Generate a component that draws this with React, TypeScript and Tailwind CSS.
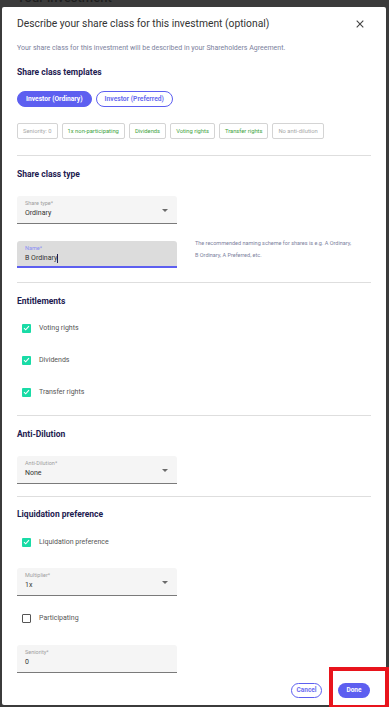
import React from 'react';

const font = { fontFamily: 'Roboto, "Liberation Sans", sans-serif' };

const Heading = ({ children, className = '' }: { children: React.ReactNode; className?: string }) => (
  <h3 className={`text-[8.5px] leading-[12px] font-bold text-[#1d2050] ${className}`}>{children}</h3>
);

const Divider = ({ className = '' }: { className?: string }) => <div className={`h-px bg-[#dedede] ${className}`} />;

const Arrow = () => (
  <svg width="6" height="4" viewBox="0 0 6 4" className="absolute right-[9px] top-[13px]">
    <path d="M0 0 L6 0 L3 3 Z" fill="#6b6b6b" />
  </svg>
);

const SelectField = ({ label, value, className = '', arrow = true }: { label: string; value: string; className?: string; arrow?: boolean }) => (
  <div className={`relative w-[160px] h-[28px] bg-[#f5f5f5] border-b border-[#7a7a7a] rounded-t-[3px] pl-[8px] pt-[4px] ${className}`}>
    <div className="text-[5.5px] leading-[7px] text-[#9e9e9e]">{label}</div>
    <div className="text-[7px] leading-[12px] text-[#333]">{value}</div>
    {arrow && <Arrow />}
  </div>
);

const Check = ({ label, checked = true, className = '' }: { label: string; checked?: boolean; className?: string }) => (
  <div className={`h-[32px] flex items-center pl-[5px] ${className}`}>
    {checked ? (
      <div className="w-[9px] h-[9px] bg-[#19dba6] rounded-[1px] flex items-center justify-center">
        <svg width="7" height="6" viewBox="0 0 7 6">
          <path d="M1 3.2 L2.7 4.8 L6 1.2" stroke="white" strokeWidth="1.1" fill="none" />
        </svg>
      </div>
    ) : (
      <div className="w-[9px] h-[9px] border-[1.5px] border-[#555] rounded-[1px]" />
    )}
    <span className="ml-[8px] text-[7px] text-[#555]">{label}</span>
  </div>
);

const tags: { text: string; on: boolean }[] = [
  { text: 'Seniority: 0', on: false },
  { text: '1x non-participating', on: true },
  { text: 'Dividends', on: true },
  { text: 'Voting rights', on: true },
  { text: 'Transfer rights', on: true },
  { text: 'No anti-dilution', on: false },
];

export default function App() {
  return (
    <div className="w-[389px] h-[707px] bg-[#3b3b3b] overflow-hidden relative" style={font}>
      <div className="h-[7px] overflow-hidden pl-[17px]">
        <div className="-mt-[9px] text-[13px] leading-[14px] font-medium text-[#1e1e1e]">Your investment</div>
      </div>
      <div className="ml-[2px] w-[384px] h-[698px] bg-white rounded-[2px] px-[15px] pt-[9px]">
        <div className="flex items-center justify-between h-[16px]">
          <h2 className="text-[10.3px] leading-[16px] text-[#333]">Describe your share class for this investment (optional)</h2>
          <svg width="8" height="8" viewBox="0 0 8 8" className="mr-[7px]">
            <path d="M0.7 0.7 L7.3 7.3 M7.3 0.7 L0.7 7.3" stroke="#444" strokeWidth="1.1" />
          </svg>
        </div>
        <p className="mt-[11px] text-[7px] leading-[10px] text-[#7c819d]">
          Your share class for this investment will be described in your Shareholders Agreement.
        </p>
        <Heading className="mt-[13px]">Share class templates</Heading>
        <div className="mt-[13px] flex gap-[4px]">
          <button className="h-[16px] px-[8px] rounded-full bg-[#5d5ff0] border border-[#5d5ff0] text-white text-[6.7px] font-bold">
            Investor (Ordinary)
          </button>
          <button className="h-[16px] px-[8px] rounded-full border border-[#5d5ff0] text-[#6b6df0] text-[6.7px] font-bold">
            Investor (Preferred)
          </button>
        </div>
        <div className="mt-[16px] flex gap-[4px]">
          {tags.map((t) => (
            <span
              key={t.text}
              className={`h-[16px] px-[5px] flex items-center border border-[#d4d4d4] rounded-[2px] text-[5.8px] ${t.on ? 'text-[#3ea33e]' : 'text-[#a8a8a8]'}`}
            >
              {t.text}
            </span>
          ))}
        </div>
        <Divider className="mt-[16px]" />
        <Heading className="mt-[12px]">Share class type</Heading>
        <SelectField className="mt-[16px]" label="Share type*" value="Ordinary" />
        <div className="mt-[17px] flex">
          <div className="w-[160px] h-[27px] bg-[#dcdcdc] border-b-2 border-[#5d5ff0] rounded-t-[3px] pl-[8px] pt-[4px]">
            <div className="text-[5.5px] leading-[7px] text-[#8a8cf5]">Name*</div>
            <div className="text-[7px] leading-[12px] text-[#333] flex items-center">
              B Ordinary<span className="inline-block w-px h-[9px] bg-[#1d2050]" />
            </div>
          </div>
          <p className="ml-[18px] -mt-[4px] text-[5.5px] leading-[12px] text-[#7c819d]">
            The recommended naming scheme for shares is e.g. A Ordinary,
            <br />B Ordinary, A Preferred, etc.
          </p>
        </div>
        <Divider className="mt-[14px]" />
        <Heading className="mt-[12px]">Entitlements</Heading>
        <Check className="mt-[5px]" label="Voting rights" />
        <Check label="Dividends" />
        <Check label="Transfer rights" />
        <Divider className="mt-[7px]" />
        <Heading className="mt-[12px]">Anti-Dilution</Heading>
        <SelectField className="mt-[16px]" label="Anti-Dilution*" value="None" />
        <Divider className="mt-[12px]" />
        <Heading className="mt-[11px]">Liquidation preference</Heading>
        <Check className="mt-[6px]" label="Liquidation preference" />
        <SelectField className="mt-[10px]" label="Multiplier*" value="1x" />
        <Check className="mt-[6px]" label="Participating" checked={false} />
        <SelectField className="mt-[11px] h-[27px]" label="Seniority*" value="0" arrow={false} />
        <div className="mt-[10px] flex justify-end gap-[16px] pr-[1px]">
          <button className="h-[15px] w-[31px] rounded-full border border-[#5d5ff0] text-[#6b6df0] text-[6.5px] font-bold">
            Cancel
          </button>
          <button className="h-[15px] w-[32px] rounded-full bg-[#5d5ff0] text-white text-[6.5px] font-bold">Done</button>
        </div>
      </div>
      <div className="absolute left-[329px] top-[667px] w-[60px] h-[42px] border-[4px] border-[#e8141c]" />
    </div>
  );
}
